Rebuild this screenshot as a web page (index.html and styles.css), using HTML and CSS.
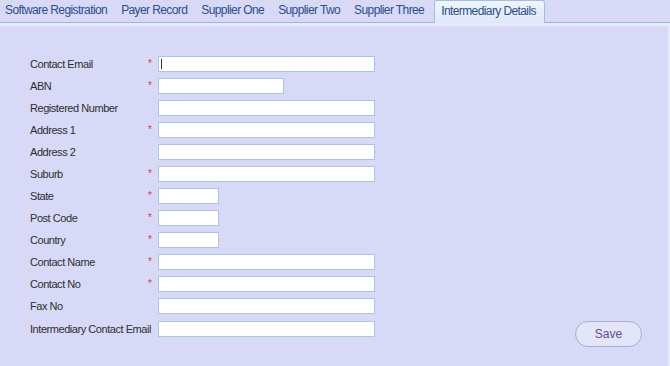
FILE: index.html
```html
<!DOCTYPE html>
<html lang="en">
<head>
    <meta charset="UTF-8">
    <title>Intermediary Details</title>
    <link rel="stylesheet" href="styles.css">
</head>
<body>
    <div class="tabs">
        <a class="tab first">Software Registration</a>
        <a class="tab">Payer Record</a>
        <a class="tab">Supplier One</a>
        <a class="tab">Supplier Two</a>
        <a class="tab">Supplier Three</a>
        <a class="tab active">Intermediary Details</a>
    </div>

    <div class="panel">
        <div class="form-grid">
            <label>Contact Email</label><span class="req">*</span>
            <div class="field"><input type="text" class="wide"><span class="caret"></span></div>

            <label>ABN</label><span class="req">*</span>
            <div class="field"><input type="text" class="mid"></div>

            <label>Registered Number</label><span></span>
            <div class="field"><input type="text" class="wide"></div>

            <label>Address 1</label><span class="req">*</span>
            <div class="field"><input type="text" class="wide"></div>

            <label>Address 2</label><span></span>
            <div class="field"><input type="text" class="wide"></div>

            <label>Suburb</label><span class="req">*</span>
            <div class="field"><input type="text" class="wide"></div>

            <label>State</label><span class="req">*</span>
            <div class="field"><input type="text" class="short"></div>

            <label>Post Code</label><span class="req">*</span>
            <div class="field"><input type="text" class="short"></div>

            <label>Country</label><span class="req">*</span>
            <div class="field"><input type="text" class="short"></div>

            <label>Contact Name</label><span class="req">*</span>
            <div class="field"><input type="text" class="wide"></div>

            <label>Contact No</label><span class="req">*</span>
            <div class="field"><input type="text" class="wide"></div>

            <label>Fax No</label><span></span>
            <div class="field"><input type="text" class="wide"></div>

            <label class="last">Intermediary Contact Email</label><span class="last"></span>
            <div class="field last"><input type="text" class="wide"></div>
        </div>

        <div class="actions">
            <button class="save-button">Save</button>
        </div>
    </div>
</body>
</html>
```

FILE: styles.css
```css
* {
    margin: 0;
    padding: 0;
    box-sizing: border-box;
}

html, body {
    height: 100%;
}

body {
    font-family: "Liberation Sans", Arial, sans-serif;
    background-color: #d7d9f6;
    overflow: hidden;
    display: flex;
    flex-direction: column;
}

/* tab strip */
.tabs {
    display: flex;
    align-items: flex-end;
    height: 23px;
    border-bottom: 1px solid #98b6e0;
}

.tab {
    padding: 0 7px 5px;
    font-size: 12px;
    letter-spacing: -0.6px;
    color: #2b4d8f;
    line-height: 13px;
    cursor: pointer;
}

.tab.first {
    padding-left: 5px;
}

.tab.active {
    margin-left: 3px;
    margin-bottom: -1px;
    height: 23px;
    padding: 4px 8px 0 6px;
    background: linear-gradient(#f0f5fd, #dfe8f9);
    border: 1px solid #a3bde3;
    border-bottom: none;
    border-radius: 3px 3px 0 0;
}

/* panel */
.panel {
    flex: 1;
    display: flex;
    border-top: 3px solid #e5ebfa;
    border-right: 2px solid #e5ebfa;
    padding: 30px 26px 0 30px;
}

.form-grid {
    display: grid;
    grid-template-columns: 118px 10px auto;
    grid-auto-rows: 16px;
    row-gap: 6px;
    align-items: center;
    align-content: start;
}

.form-grid label {
    font-size: 11px;
    letter-spacing: -0.45px;
    color: #2e2e2e;
    white-space: nowrap;
}

.form-grid .last {
    margin-top: 1px;
}

.req {
    color: #e8323c;
    font-size: 10px;
    line-height: 10px;
    margin-top: 0;
}

.field {
    position: relative;
    height: 16px;
}

.field input {
    display: block;
    height: 16px;
    border: 1px solid #a9c4ee;
    background: #fff;
    outline: none;
}

.wide { width: 217px; }
.mid { width: 126px; }
.short { width: 61px; }

.caret {
    position: absolute;
    left: 3px;
    top: 3px;
    width: 1px;
    height: 10px;
    background: #333;
}

.actions {
    flex: 1;
    display: flex;
    justify-content: flex-end;
    align-items: flex-start;
    padding-top: 265px;
}

.save-button {
    width: 67px;
    height: 26px;
    border: 1px solid #9fb2d6;
    border-radius: 13px;
    background: #e5e5f8;
    color: #5b4c9e;
    font-family: "Liberation Sans", Arial, sans-serif;
    font-size: 12px;
    cursor: pointer;
}
```
